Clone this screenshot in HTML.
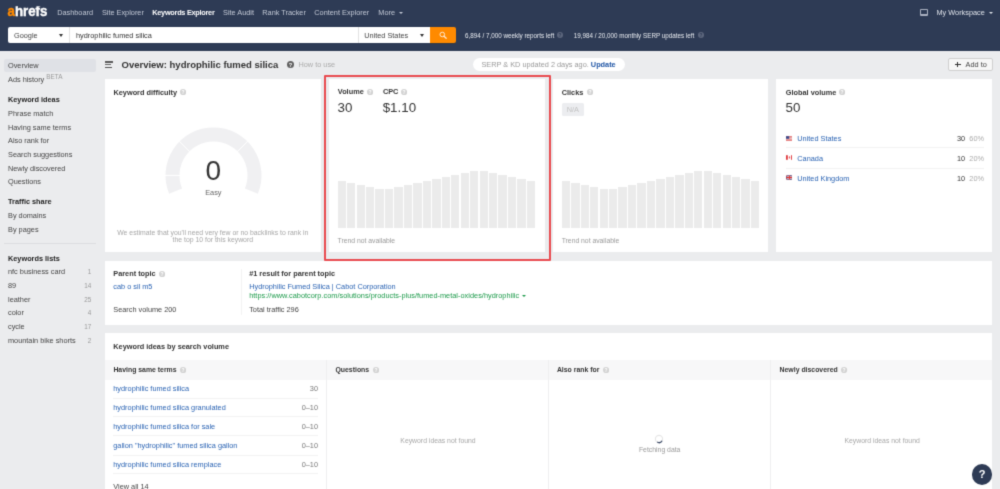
<!DOCTYPE html>
<html><head><meta charset="utf-8"><title>Keywords Explorer</title>
<style>
html,body{margin:0;padding:0;}
body{width:1000px;height:489px;overflow:hidden;position:relative;background:#ebecee;font-family:"Liberation Sans",sans-serif;-webkit-font-smoothing:antialiased;}
.t{position:absolute;white-space:nowrap;}
.b{position:absolute;}
.i{position:absolute;border-radius:50%;color:#fff;font-size:4.6px;font-weight:bold;text-align:center;}
.iis{vertical-align:-0.9px;margin-left:3.6px;}
.caret{position:absolute;width:0;height:0;border-left:2.2px solid transparent;border-right:2.2px solid transparent;border-top:2.6px solid #fff;}

.c2{border-left-width:2.5px;border-right-width:2.5px;border-top-width:3px;}
#root{position:absolute;left:-10px;top:-10px;width:1020px;height:509px;overflow:hidden;will-change:transform;filter:url(#soft);}
#in{position:absolute;left:10px;top:10px;width:1000px;height:489px;}
</style></head><body><svg width="0" height="0" style="position:absolute"><defs><filter id="soft" x="0" y="0" width="100%" height="100%" color-interpolation-filters="sRGB"><feConvolveMatrix order="3" kernelMatrix="0.02 0.1 0.02 0.1 0.52 0.1 0.02 0.1 0.02" divisor="1" edgeMode="duplicate" preserveAlpha="true"/></filter></defs></svg>
<div id="root"><div id="in">
<div class="b" style="left:-10.00px;top:-10.00px;width:1020.00px;height:509.00px;background:#ebecee;"></div>
<div class="b" style="left:-10.00px;top:-10.00px;width:1020.00px;height:60.60px;background:#2e3b55;"></div>
<svg class="b" style="left:0;top:0" width="60" height="24" viewBox="0 0 60 24"><defs><clipPath id="lc"><rect x="0" y="6.2" width="60" height="13"/></clipPath></defs><g clip-path="url(#lc)"><text x="7.5" y="16.45" font-family="Liberation Sans, sans-serif" font-size="14.8" font-weight="bold" textLength="39.8" lengthAdjust="spacingAndGlyphs" fill="#fff" stroke="#fff" stroke-width="0.45"><tspan fill="#ff8a00" stroke="#ff8a00">a</tspan>hrefs</text></g></svg>
<div class="t" style="top:8.20px;font-size:7.33px;line-height:10px;color:#c3c9d6;left:57.20px;">Dashboard</div>
<div class="t" style="top:8.20px;font-size:7.33px;line-height:10px;color:#c3c9d6;left:101.90px;">Site Explorer</div>
<div class="t" style="top:8.20px;font-size:7.33px;line-height:10px;color:#fff;font-weight:bold;letter-spacing:-0.27px;left:152.30px;">Keywords Explorer</div>
<div class="t" style="top:8.20px;font-size:7.33px;line-height:10px;color:#c3c9d6;left:223.00px;">Site Audit</div>
<div class="t" style="top:8.20px;font-size:7.33px;line-height:10px;color:#c3c9d6;left:262.30px;">Rank Tracker</div>
<div class="t" style="top:8.20px;font-size:7.33px;line-height:10px;color:#c3c9d6;left:314.30px;">Content Explorer</div>
<div class="t" style="top:8.20px;font-size:7.33px;line-height:10px;color:#c3c9d6;left:378.30px;">More</div>
<div class="caret" style="left:399.2px;top:11.6px;border-top-color:#c3c9d6"></div>
<div class="b" style="left:920px;top:8.7px;width:8.2px;height:7.6px;box-sizing:border-box;border:1px solid #aab1c0;border-bottom-width:2px;border-radius:1px"></div>
<div class="t" style="top:8.20px;font-size:7.33px;line-height:10px;color:#dfe3ea;left:936.50px;">My Workspace</div>
<div class="caret" style="left:988.6px;top:11.6px;border-top-color:#dfe3ea"></div>
<div class="b" style="left:8.10px;top:27.20px;width:421.90px;height:15.80px;background:#fff;border-radius:2px 0 0 2px;"></div>
<div class="b" style="left:69.30px;top:27.20px;width:0.70px;height:15.80px;background:#e2e2e2;"></div>
<div class="b" style="left:357.60px;top:27.20px;width:0.70px;height:15.80px;background:#e2e2e2;"></div>
<div class="t" style="top:30.70px;font-size:7.33px;line-height:10px;color:#444;left:14.00px;">Google</div>
<div class="caret c2" style="left:59.0px;top:33.9px;border-top-color:#333"></div>
<div class="t" style="top:30.70px;font-size:7.33px;line-height:10px;color:#333;left:76.00px;">hydrophilic fumed silica</div>
<div class="t" style="top:30.70px;font-size:7.33px;line-height:10px;color:#444;left:364.20px;">United States</div>
<div class="caret c2" style="left:419.5px;top:33.9px;border-top-color:#333"></div>
<div class="b" style="left:429.90px;top:27.30px;width:26.30px;height:15.70px;background:#ff8a00;border-radius:0 2px 2px 0;box-shadow:0 0.8px 0 #3a3a3a;"></div>
<svg class="b" style="left:436px;top:28px" width="14" height="14" viewBox="0 0 14 14"><circle cx="6.3" cy="6.5" r="2.3" fill="none" stroke="#ffe9d2" stroke-width="1"/><path d="M8 8.2 L10.2 10.3" stroke="#ffe9d2" stroke-width="1.2" stroke-linecap="round"/></svg>
<div class="t" style="top:30.70px;font-size:6.3px;line-height:10px;color:#e8ebf0;left:465.00px;">6,894 / 7,000 weekly reports left</div>
<svg class="b" style="left:557.10px;top:32.30px" width="6" height="6" viewBox="0 0 10 10"><circle cx="5" cy="5" r="5" fill="#5d677d"/><text x="5" y="7.9" font-size="8" font-weight="bold" text-anchor="middle" fill="#2e3b55">?</text></svg>
<div class="t" style="top:30.70px;font-size:6.3px;line-height:10px;color:#e8ebf0;left:573.70px;">19,984 / 20,000 monthly SERP updates left</div>
<svg class="b" style="left:697.70px;top:32.30px" width="6" height="6" viewBox="0 0 10 10"><circle cx="5" cy="5" r="5" fill="#5d677d"/><text x="5" y="7.9" font-size="8" font-weight="bold" text-anchor="middle" fill="#2e3b55">?</text></svg>
<div class="b" style="left:4.10px;top:59.20px;width:92.00px;height:12.70px;background:#dfe1e6;border-radius:2px;"></div>
<div class="t" style="top:61.20px;font-size:7.33px;line-height:10px;color:#444;left:8.00px;">Overview</div>
<div class="t" style="top:75.20px;font-size:7.33px;line-height:10px;color:#444;left:8.00px;">Ads history <span style="font-size:6.4px;color:#999;position:relative;top:-3px">BETA</span></div>
<div class="t" style="top:95.20px;font-size:7.33px;line-height:10px;color:#222;font-weight:bold;left:8.00px;">Keyword ideas</div>
<div class="t" style="top:108.70px;font-size:7.33px;line-height:10px;color:#444;left:8.00px;">Phrase match</div>
<div class="t" style="top:122.50px;font-size:7.33px;line-height:10px;color:#444;left:8.00px;">Having same terms</div>
<div class="t" style="top:136.10px;font-size:7.33px;line-height:10px;color:#444;left:8.00px;">Also rank for</div>
<div class="t" style="top:149.80px;font-size:7.33px;line-height:10px;color:#444;left:8.00px;">Search suggestions</div>
<div class="t" style="top:163.60px;font-size:7.33px;line-height:10px;color:#444;left:8.00px;">Newly discovered</div>
<div class="t" style="top:177.30px;font-size:7.33px;line-height:10px;color:#444;left:8.00px;">Questions</div>
<div class="t" style="top:197.10px;font-size:7.33px;line-height:10px;color:#222;font-weight:bold;left:8.00px;">Traffic share</div>
<div class="t" style="top:211.10px;font-size:7.33px;line-height:10px;color:#444;left:8.00px;">By domains</div>
<div class="t" style="top:224.60px;font-size:7.33px;line-height:10px;color:#444;left:8.00px;">By pages</div>
<div class="t" style="top:253.80px;font-size:7.33px;line-height:10px;color:#222;font-weight:bold;left:8.00px;">Keywords lists</div>
<div class="b" style="left:4.00px;top:243.30px;width:92.00px;height:0.70px;background:#dcdde0;"></div>
<div class="t" style="top:267.30px;font-size:7.33px;line-height:10px;color:#444;left:8.00px;">nfc business card</div>
<div class="t" style="top:267.30px;font-size:6.3px;line-height:10px;color:#999;right:908.80px;">1</div>
<div class="t" style="top:281.20px;font-size:7.33px;line-height:10px;color:#444;left:8.00px;">89</div>
<div class="t" style="top:281.20px;font-size:6.3px;line-height:10px;color:#999;right:908.80px;">14</div>
<div class="t" style="top:294.90px;font-size:7.33px;line-height:10px;color:#444;left:8.00px;">leather</div>
<div class="t" style="top:294.90px;font-size:6.3px;line-height:10px;color:#999;right:908.80px;">25</div>
<div class="t" style="top:308.40px;font-size:7.33px;line-height:10px;color:#444;left:8.00px;">color</div>
<div class="t" style="top:308.40px;font-size:6.3px;line-height:10px;color:#999;right:908.80px;">4</div>
<div class="t" style="top:322.30px;font-size:7.33px;line-height:10px;color:#444;left:8.00px;">cycle</div>
<div class="t" style="top:322.30px;font-size:6.3px;line-height:10px;color:#999;right:908.80px;">17</div>
<div class="t" style="top:335.80px;font-size:7.33px;line-height:10px;color:#444;left:8.00px;">mountain bike shorts</div>
<div class="t" style="top:335.80px;font-size:6.3px;line-height:10px;color:#999;right:908.80px;">2</div>
<div class="b" style="left:104.70px;top:61.40px;width:8.40px;height:1.40px;background:#5a5a5a;"></div>
<div class="b" style="left:104.70px;top:64.00px;width:6.10px;height:1.40px;background:#666;"></div>
<div class="b" style="left:104.70px;top:66.80px;width:7.40px;height:1.40px;background:#555;"></div>
<div class="t" style="top:58.83px;font-size:9.5px;line-height:12.35px;color:#333;font-weight:bold;left:121.50px;">Overview: hydrophilic fumed silica</div>
<svg class="b" style="left:286.70px;top:61.00px" width="7" height="7" viewBox="0 0 10 10"><circle cx="5" cy="5" r="5" fill="#606060"/><text x="5" y="7.9" font-size="8" font-weight="bold" text-anchor="middle" fill="#fff">?</text></svg>
<div class="t" style="top:59.90px;font-size:7.33px;line-height:10px;color:#aaa;left:298.50px;">How to use</div>
<div class="b" style="left:473.00px;top:58.20px;width:151.50px;height:13.20px;background:#fff;border-radius:7px;"></div>
<div class="t" style="top:59.90px;font-size:7.33px;line-height:10px;color:#999;left:481.40px;">SERP &amp; KD updated 2 days ago. <b style="color:#1f55a5">Update</b></div>
<div class="b" style="left:948.30px;top:57.80px;width:44.30px;height:13.60px;background:#f7f7f7;box-sizing:border-box;border:0.7px solid #cfcfcf;border-radius:2px;"></div>
<div class="b" style="left:955.2px;top:64.2px;width:5.4px;height:1.1px;background:#333"></div><div class="b" style="left:957.35px;top:62.05px;width:1.1px;height:5.4px;background:#333"></div>
<div class="t" style="top:60.30px;font-size:7.33px;line-height:10px;color:#444;left:965.60px;">Add to</div>
<div class="b" style="left:105.00px;top:79.00px;width:215.75px;height:173.00px;background:#fff;"></div>
<div class="b" style="left:328.75px;top:79.00px;width:215.75px;height:173.00px;background:#fff;"></div>
<div class="b" style="left:552.50px;top:79.00px;width:215.75px;height:173.00px;background:#fff;"></div>
<div class="b" style="left:776.25px;top:79.00px;width:215.75px;height:173.00px;background:#fff;"></div>
<div class="t" style="top:87.70px;font-size:7.33px;line-height:10px;color:#333;font-weight:bold;left:113.50px;">Keyword difficulty</div>
<svg class="b" style="left:179.70px;top:89.20px" width="6.2" height="6.2" viewBox="0 0 10 10"><circle cx="5" cy="5" r="5" fill="#d2d2d2"/><text x="5" y="7.9" font-size="8" font-weight="bold" text-anchor="middle" fill="#fff">?</text></svg>
<svg class="b" style="left:0;top:0" width="1000" height="489"><path d="M169.15 193.77A48 48 0 1 1 257.85 193.77L244.91 188.41A34 34 0 1 0 182.09 188.41Z" fill="#f0f0f2"/><path d="M164.50 175.40L180.50 175.40" stroke="#fff" stroke-width="1"/><path d="M178.85 140.75L190.17 152.07" stroke="#fff" stroke-width="1"/><path d="M248.15 140.75L236.83 152.07" stroke="#fff" stroke-width="1"/></svg>
<div class="t" style="top:153.32px;font-size:28px;line-height:36.4px;color:#333;left:13.40px;width:400px;text-align:center;">0</div>
<div class="t" style="top:187.60px;font-size:7.33px;line-height:10px;color:#666;left:13.40px;width:400px;text-align:center;">Easy</div>
<div class="t" style="top:227.50px;font-size:6.87px;line-height:10px;color:#a6a6a6;left:12.80px;width:400px;text-align:center;">We estimate that you'll need very few or no backlinks to rank in</div>
<div class="t" style="top:235.40px;font-size:6.87px;line-height:10px;color:#a6a6a6;left:12.80px;width:400px;text-align:center;">the top 10 for this keyword</div>
<div class="b" style="left:337.60px;top:180.80px;width:8.35px;height:47.00px;background:#ebebeb;"></div>
<div class="b" style="left:347.06px;top:182.70px;width:8.35px;height:45.10px;background:#ebebeb;"></div>
<div class="b" style="left:356.52px;top:184.50px;width:8.35px;height:43.30px;background:#ebebeb;"></div>
<div class="b" style="left:365.98px;top:186.70px;width:8.35px;height:41.10px;background:#ebebeb;"></div>
<div class="b" style="left:375.44px;top:188.50px;width:8.35px;height:39.30px;background:#ebebeb;"></div>
<div class="b" style="left:384.90px;top:188.50px;width:8.35px;height:39.30px;background:#ebebeb;"></div>
<div class="b" style="left:394.36px;top:186.70px;width:8.35px;height:41.10px;background:#ebebeb;"></div>
<div class="b" style="left:403.82px;top:184.50px;width:8.35px;height:43.30px;background:#ebebeb;"></div>
<div class="b" style="left:413.28px;top:182.70px;width:8.35px;height:45.10px;background:#ebebeb;"></div>
<div class="b" style="left:422.74px;top:180.80px;width:8.35px;height:47.00px;background:#ebebeb;"></div>
<div class="b" style="left:432.20px;top:179.00px;width:8.35px;height:48.80px;background:#ebebeb;"></div>
<div class="b" style="left:441.66px;top:177.00px;width:8.35px;height:50.80px;background:#ebebeb;"></div>
<div class="b" style="left:451.12px;top:175.10px;width:8.35px;height:52.70px;background:#ebebeb;"></div>
<div class="b" style="left:460.58px;top:173.30px;width:8.35px;height:54.50px;background:#ebebeb;"></div>
<div class="b" style="left:470.04px;top:171.40px;width:8.35px;height:56.40px;background:#ebebeb;"></div>
<div class="b" style="left:479.50px;top:171.40px;width:8.35px;height:56.40px;background:#ebebeb;"></div>
<div class="b" style="left:488.96px;top:173.30px;width:8.35px;height:54.50px;background:#ebebeb;"></div>
<div class="b" style="left:498.42px;top:175.10px;width:8.35px;height:52.70px;background:#ebebeb;"></div>
<div class="b" style="left:507.88px;top:177.00px;width:8.35px;height:50.80px;background:#ebebeb;"></div>
<div class="b" style="left:517.34px;top:179.00px;width:8.35px;height:48.80px;background:#ebebeb;"></div>
<div class="b" style="left:526.80px;top:180.80px;width:8.35px;height:47.00px;background:#ebebeb;"></div>
<div class="b" style="left:561.70px;top:180.80px;width:8.35px;height:47.00px;background:#ebebeb;"></div>
<div class="b" style="left:571.16px;top:182.70px;width:8.35px;height:45.10px;background:#ebebeb;"></div>
<div class="b" style="left:580.62px;top:184.50px;width:8.35px;height:43.30px;background:#ebebeb;"></div>
<div class="b" style="left:590.08px;top:186.70px;width:8.35px;height:41.10px;background:#ebebeb;"></div>
<div class="b" style="left:599.54px;top:188.50px;width:8.35px;height:39.30px;background:#ebebeb;"></div>
<div class="b" style="left:609.00px;top:188.50px;width:8.35px;height:39.30px;background:#ebebeb;"></div>
<div class="b" style="left:618.46px;top:186.70px;width:8.35px;height:41.10px;background:#ebebeb;"></div>
<div class="b" style="left:627.92px;top:184.50px;width:8.35px;height:43.30px;background:#ebebeb;"></div>
<div class="b" style="left:637.38px;top:182.70px;width:8.35px;height:45.10px;background:#ebebeb;"></div>
<div class="b" style="left:646.84px;top:180.80px;width:8.35px;height:47.00px;background:#ebebeb;"></div>
<div class="b" style="left:656.30px;top:179.00px;width:8.35px;height:48.80px;background:#ebebeb;"></div>
<div class="b" style="left:665.76px;top:177.00px;width:8.35px;height:50.80px;background:#ebebeb;"></div>
<div class="b" style="left:675.22px;top:175.10px;width:8.35px;height:52.70px;background:#ebebeb;"></div>
<div class="b" style="left:684.68px;top:173.30px;width:8.35px;height:54.50px;background:#ebebeb;"></div>
<div class="b" style="left:694.14px;top:171.40px;width:8.35px;height:56.40px;background:#ebebeb;"></div>
<div class="b" style="left:703.60px;top:171.40px;width:8.35px;height:56.40px;background:#ebebeb;"></div>
<div class="b" style="left:713.06px;top:173.30px;width:8.35px;height:54.50px;background:#ebebeb;"></div>
<div class="b" style="left:722.52px;top:175.10px;width:8.35px;height:52.70px;background:#ebebeb;"></div>
<div class="b" style="left:731.98px;top:177.00px;width:8.35px;height:50.80px;background:#ebebeb;"></div>
<div class="b" style="left:741.44px;top:179.00px;width:8.35px;height:48.80px;background:#ebebeb;"></div>
<div class="b" style="left:750.90px;top:180.80px;width:8.35px;height:47.00px;background:#ebebeb;"></div>
<div class="t" style="top:87.40px;font-size:7.33px;line-height:10px;color:#333;font-weight:bold;left:337.80px;">Volume</div>
<svg class="b" style="left:366.70px;top:89.20px" width="6.2" height="6.2" viewBox="0 0 10 10"><circle cx="5" cy="5" r="5" fill="#d2d2d2"/><text x="5" y="7.9" font-size="8" font-weight="bold" text-anchor="middle" fill="#fff">?</text></svg>
<div class="t" style="top:87.40px;font-size:7.33px;line-height:10px;color:#333;font-weight:bold;left:382.90px;">CPC</div>
<svg class="b" style="left:400.80px;top:89.20px" width="6.2" height="6.2" viewBox="0 0 10 10"><circle cx="5" cy="5" r="5" fill="#d2d2d2"/><text x="5" y="7.9" font-size="8" font-weight="bold" text-anchor="middle" fill="#fff">?</text></svg>
<div class="t" style="top:99.09px;font-size:13.33px;line-height:17.33px;color:#333;left:337.60px;">30</div>
<div class="t" style="top:99.09px;font-size:13.33px;line-height:17.33px;color:#333;left:382.70px;">$1.10</div>
<div class="t" style="top:235.50px;font-size:6.8px;line-height:10px;color:#999;left:337.60px;">Trend not available</div>
<div class="t" style="top:87.70px;font-size:7.33px;line-height:10px;color:#333;font-weight:bold;left:561.70px;">Clicks</div>
<svg class="b" style="left:586.50px;top:89.20px" width="6.2" height="6.2" viewBox="0 0 10 10"><circle cx="5" cy="5" r="5" fill="#d2d2d2"/><text x="5" y="7.9" font-size="8" font-weight="bold" text-anchor="middle" fill="#fff">?</text></svg>
<div class="b" style="left:561.80px;top:103.00px;width:22.20px;height:12.80px;background:#ecedf0;border-radius:1.5px;"></div>
<div class="t" style="top:104.90px;font-size:7.33px;line-height:10px;color:#c2c2c2;left:372.90px;width:400px;text-align:center;">N/A</div>
<div class="t" style="top:235.50px;font-size:6.8px;line-height:10px;color:#999;left:561.70px;">Trend not available</div>
<div class="t" style="top:87.70px;font-size:7.33px;line-height:10px;color:#333;font-weight:bold;left:785.80px;">Global volume</div>
<svg class="b" style="left:839.30px;top:89.20px" width="6.2" height="6.2" viewBox="0 0 10 10"><circle cx="5" cy="5" r="5" fill="#d2d2d2"/><text x="5" y="7.9" font-size="8" font-weight="bold" text-anchor="middle" fill="#fff">?</text></svg>
<div class="t" style="top:98.99px;font-size:13.33px;line-height:17.33px;color:#333;left:785.60px;">50</div>
<svg class="b" style="left:785.5px;top:135.50px" width="6.9" height="5" viewBox="0 0 15 10"><rect width="15" height="10" fill="#f4f4f4"/><g fill="#d44"><rect y="0" width="15" height="1.4"/><rect y="2.9" width="15" height="1.4"/><rect y="5.8" width="15" height="1.4"/><rect y="8.6" width="15" height="1.4"/></g><rect width="7" height="5.6" fill="#3a4a8c"/></svg>
<div class="t" style="top:133.90px;font-size:7.33px;line-height:10px;color:#2a63b3;left:797.30px;">United States</div>
<div class="t" style="top:133.90px;font-size:7.33px;line-height:10px;color:#333;right:34.80px;">30</div>
<div class="t" style="top:133.90px;font-size:7.33px;line-height:10px;color:#aaa;right:16.00px;">60%</div>
<svg class="b" style="left:785.5px;top:155.40px" width="6.9" height="5" viewBox="0 0 15 10"><rect width="15" height="10" fill="#fff"/><rect width="4" height="10" fill="#e03a3e"/><rect x="11" width="4" height="10" fill="#e03a3e"/><path d="M7.5 2 L9.3 5.2 L8 5.6 L8 8 L7 8 L7 5.6 L5.7 5.2 Z" fill="#e03a3e"/></svg>
<div class="t" style="top:153.80px;font-size:7.33px;line-height:10px;color:#2a63b3;left:797.30px;">Canada</div>
<div class="t" style="top:153.80px;font-size:7.33px;line-height:10px;color:#333;right:34.80px;">10</div>
<div class="t" style="top:153.80px;font-size:7.33px;line-height:10px;color:#aaa;right:16.00px;">20%</div>
<svg class="b" style="left:785.5px;top:175.40px" width="6.9" height="5" viewBox="0 0 15 10"><rect width="15" height="10" fill="#2b3a7a"/><path d="M0 0L15 10M15 0L0 10" stroke="#fff" stroke-width="1.8"/><path d="M0 0L15 10M15 0L0 10" stroke="#d33" stroke-width="1"/><path d="M7.5 0V10M0 5H15" stroke="#fff" stroke-width="3"/><path d="M7.5 0V10M0 5H15" stroke="#d33" stroke-width="2.2"/></svg>
<div class="t" style="top:173.80px;font-size:7.33px;line-height:10px;color:#2a63b3;left:797.30px;">United Kingdom</div>
<div class="t" style="top:173.80px;font-size:7.33px;line-height:10px;color:#333;right:34.80px;">10</div>
<div class="t" style="top:173.80px;font-size:7.33px;line-height:10px;color:#aaa;right:16.00px;">20%</div>
<div class="b" style="left:785.50px;top:147.20px;width:198.50px;height:0.70px;background:#f2f2f2;"></div>
<div class="b" style="left:785.50px;top:167.70px;width:198.50px;height:0.70px;background:#f2f2f2;"></div>
<div class="b" style="left:324px;top:75px;width:227px;height:186px;box-sizing:border-box;border:2px solid #e94b50;border-radius:1px"></div>
<div class="b" style="left:105.00px;top:260.70px;width:887.00px;height:64.20px;background:#fff;"></div>
<div class="t" style="top:269.30px;font-size:7.33px;line-height:10px;color:#333;font-weight:bold;left:113.30px;">Parent topic</div>
<svg class="b" style="left:159.10px;top:270.80px" width="6.2" height="6.2" viewBox="0 0 10 10"><circle cx="5" cy="5" r="5" fill="#d2d2d2"/><text x="5" y="7.9" font-size="8" font-weight="bold" text-anchor="middle" fill="#fff">?</text></svg>
<div class="t" style="top:281.90px;font-size:7.33px;line-height:10px;color:#2a63b3;left:113.30px;">cab o sil m5</div>
<div class="t" style="top:305.20px;font-size:7.33px;line-height:10px;color:#444;left:113.30px;">Search volume 200</div>
<div class="b" style="left:240.60px;top:268.80px;width:0.70px;height:46.50px;background:#f3f3f3;"></div>
<div class="t" style="top:269.30px;font-size:7.33px;line-height:10px;color:#333;font-weight:bold;left:249.20px;">#1 result for parent topic</div>
<div class="t" style="top:281.80px;font-size:7.33px;line-height:10px;color:#2a63b3;left:249.20px;">Hydrophilic Fumed Silica | Cabot Corporation</div>
<div class="t" style="top:291.10px;font-size:7.33px;line-height:10px;color:#1c9a4a;letter-spacing:0.025px;left:249.20px;">https://www.cabotcorp.com/solutions/products-plus/fumed-metal-oxides/hydrophilic</div>
<div class="caret" style="left:521.6px;top:295.4px;border-top-color:#1c9a4a"></div>
<div class="t" style="top:305.20px;font-size:7.33px;line-height:10px;color:#444;left:249.20px;">Total traffic 296</div>
<div class="b" style="left:105.00px;top:333.30px;width:887.00px;height:170.00px;background:#fff;"></div>
<div class="t" style="top:342.30px;font-size:7.33px;line-height:10px;color:#333;font-weight:bold;left:113.30px;">Keyword ideas by search volume</div>
<div class="b" style="left:105.00px;top:359.90px;width:887.00px;height:19.70px;background:#f7f7f8;"></div>
<div class="b" style="left:326.40px;top:360.00px;width:0.70px;height:140.00px;background:#efeff0;"></div>
<div class="b" style="left:548.15px;top:360.00px;width:0.70px;height:140.00px;background:#efeff0;"></div>
<div class="b" style="left:769.90px;top:360.00px;width:0.70px;height:140.00px;background:#efeff0;"></div>
<div class="t" style="top:365.10px;font-size:6.9px;line-height:10px;color:#333;font-weight:bold;left:113.40px;">Having same terms<svg class="iis" width="6.2" height="6.2" viewBox="0 0 10 10"><circle cx="5" cy="5" r="5" fill="#d2d2d2"/><text x="5" y="7.9" font-size="8" font-weight="bold" text-anchor="middle" fill="#fff">?</text></svg></div>
<div class="t" style="top:365.10px;font-size:6.9px;line-height:10px;color:#333;font-weight:bold;left:335.45px;">Questions<svg class="iis" width="6.2" height="6.2" viewBox="0 0 10 10"><circle cx="5" cy="5" r="5" fill="#d2d2d2"/><text x="5" y="7.9" font-size="8" font-weight="bold" text-anchor="middle" fill="#fff">?</text></svg></div>
<div class="t" style="top:365.10px;font-size:6.9px;line-height:10px;color:#333;font-weight:bold;left:556.90px;">Also rank for<svg class="iis" width="6.2" height="6.2" viewBox="0 0 10 10"><circle cx="5" cy="5" r="5" fill="#d2d2d2"/><text x="5" y="7.9" font-size="8" font-weight="bold" text-anchor="middle" fill="#fff">?</text></svg></div>
<div class="t" style="top:365.10px;font-size:6.9px;line-height:10px;color:#333;font-weight:bold;left:779.55px;">Newly discovered<svg class="iis" width="6.2" height="6.2" viewBox="0 0 10 10"><circle cx="5" cy="5" r="5" fill="#d2d2d2"/><text x="5" y="7.9" font-size="8" font-weight="bold" text-anchor="middle" fill="#fff">?</text></svg></div>
<div class="t" style="top:384.30px;font-size:7.33px;line-height:10px;color:#2a63b3;left:113.30px;">hydrophilic fumed silica</div>
<div class="t" style="top:384.30px;font-size:7.33px;line-height:10px;color:#777;right:682.00px;">30</div>
<div class="b" style="left:113.30px;top:397.50px;width:204.70px;height:0.70px;background:#f2f2f2;"></div>
<div class="t" style="top:403.20px;font-size:7.33px;line-height:10px;color:#2a63b3;left:113.30px;">hydrophilic fumed silica granulated</div>
<div class="t" style="top:403.20px;font-size:7.33px;line-height:10px;color:#777;right:682.00px;">0–10</div>
<div class="b" style="left:113.30px;top:416.40px;width:204.70px;height:0.70px;background:#f2f2f2;"></div>
<div class="t" style="top:422.20px;font-size:7.33px;line-height:10px;color:#2a63b3;left:113.30px;">hydrophilic fumed silica for sale</div>
<div class="t" style="top:422.20px;font-size:7.33px;line-height:10px;color:#777;right:682.00px;">0–10</div>
<div class="b" style="left:113.30px;top:435.40px;width:204.70px;height:0.70px;background:#f2f2f2;"></div>
<div class="t" style="top:441.30px;font-size:7.33px;line-height:10px;color:#2a63b3;left:113.30px;">gallon "hydrophilic" fumed silica gallon</div>
<div class="t" style="top:441.30px;font-size:7.33px;line-height:10px;color:#777;right:682.00px;">0–10</div>
<div class="b" style="left:113.30px;top:454.50px;width:204.70px;height:0.70px;background:#f2f2f2;"></div>
<div class="t" style="top:460.20px;font-size:7.33px;line-height:10px;color:#2a63b3;left:113.30px;">hydrophilic fumed silica remplace</div>
<div class="t" style="top:460.20px;font-size:7.33px;line-height:10px;color:#777;right:682.00px;">0–10</div>
<div class="b" style="left:113.30px;top:473.40px;width:204.70px;height:0.70px;background:#f2f2f2;"></div>
<div class="t" style="top:481.70px;font-size:7.33px;line-height:10px;color:#444;left:113.30px;">View all 14</div>
<div class="t" style="top:435.80px;font-size:6.85px;line-height:10px;color:#a6a6a6;left:238.00px;width:400px;text-align:center;">Keyword ideas not found</div>
<div class="t" style="top:435.80px;font-size:6.85px;line-height:10px;color:#a6a6a6;left:682.10px;width:400px;text-align:center;">Keyword ideas not found</div>
<div class="t" style="top:444.70px;font-size:6.85px;line-height:10px;color:#999;left:459.70px;width:400px;text-align:center;">Fetching data</div>
<svg class="b" style="left:654.4px;top:433.7px" width="10" height="10" viewBox="0 0 10 10"><circle cx="5" cy="5" r="3.6" fill="none" stroke="#e6e6e6" stroke-width="1.1"/><path d="M8.1 6.8 A3.6 3.6 0 0 1 3.2 8.1" fill="none" stroke="#3b4a66" stroke-width="1.2"/></svg>
<div class="b" style="left:971.9px;top:464px;width:20.5px;height:20.5px;border-radius:50%;background:#2e3b55;color:#fff;font-weight:bold;font-size:11px;line-height:20.5px;text-align:center">?</div>
</div></div></body></html>
